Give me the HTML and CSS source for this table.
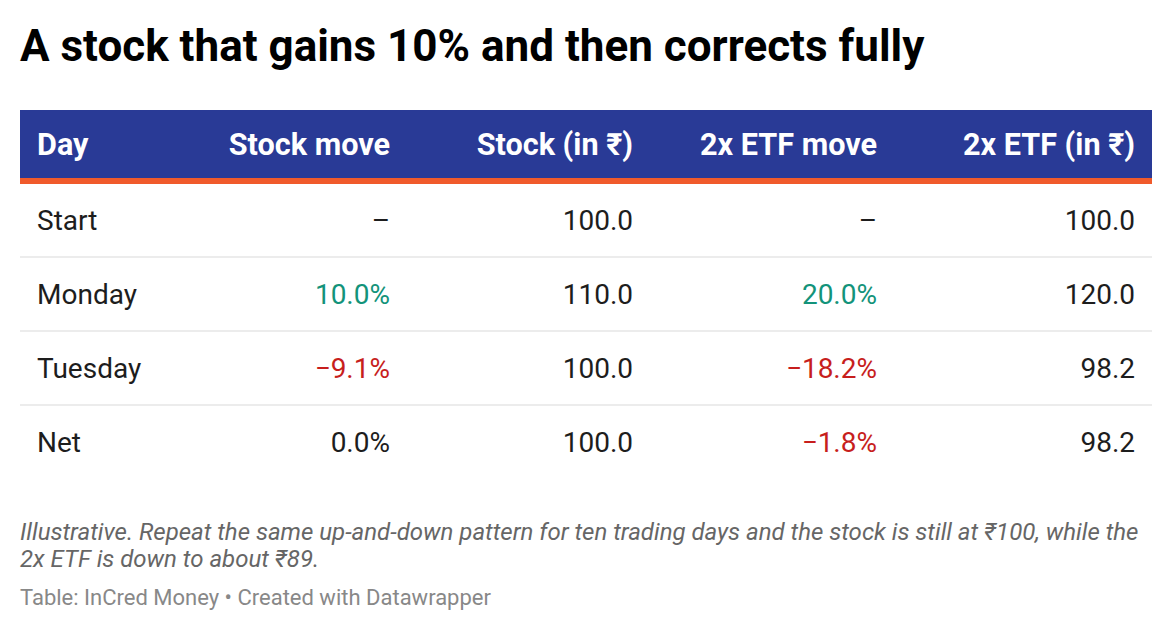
FILE: index.html
```html
<!DOCTYPE html>
<html lang="en">
<head>
<meta charset="utf-8">
<title>A stock that gains 10% and then corrects fully</title>
<link rel="stylesheet" href="styles.css">
</head>
<body>
<div class="chart">
  <h1 class="title">A stock that gains 10% and then corrects fully</h1>
  <div class="table">
    <div class="row head">
      <div class="cell left">Day</div>
      <div class="cell">Stock move</div>
      <div class="cell">Stock (in ₹)</div>
      <div class="cell">2x ETF move</div>
      <div class="cell">2x ETF (in ₹)</div>
    </div>
    <div class="row">
      <div class="cell left">Start</div>
      <div class="cell">–</div>
      <div class="cell">100.0</div>
      <div class="cell">–</div>
      <div class="cell">100.0</div>
    </div>
    <div class="row">
      <div class="cell left">Monday</div>
      <div class="cell up">10.0%</div>
      <div class="cell">110.0</div>
      <div class="cell up">20.0%</div>
      <div class="cell">120.0</div>
    </div>
    <div class="row">
      <div class="cell left">Tuesday</div>
      <div class="cell down">−9.1%</div>
      <div class="cell">100.0</div>
      <div class="cell down">−18.2%</div>
      <div class="cell">98.2</div>
    </div>
    <div class="row last">
      <div class="cell left">Net</div>
      <div class="cell">0.0%</div>
      <div class="cell">100.0</div>
      <div class="cell down">−1.8%</div>
      <div class="cell">98.2</div>
    </div>
  </div>
  <p class="notes">Illustrative. Repeat the same up-and-down pattern for ten trading days and the stock is still at ₹100, while the 2x ETF is down to about ₹89.</p>
  <p class="source">Table: InCred Money • Created with Datawrapper</p>
</div>
</body>
</html>
```
FILE: styles.css
```css
html, body {
  margin: 0;
  padding: 0;
  background: #ffffff;
}
body {
  font-family: Roboto, "Noto Sans", "DejaVu Sans", sans-serif;
  color: #1d1d1d;
}
.chart {
  padding: 20px 20px 0 20px;
}
.title {
  margin: 0;
  font-size: 44px;
  line-height: 52px;
  font-weight: 700;
  color: #000;
}
.table {
  margin-top: 38px;
}
.row {
  display: grid;
  grid-template-columns: 144px 243px 243px 244px 258px;
  height: 72px;
  align-items: center;
  border-bottom: 2px solid #ececec;
}
.row.last {
  border-bottom: none;
}
.row.head {
  height: 68px;
  background: #293a96;
  color: #ffffff;
  font-weight: 700;
  border-bottom: 6px solid #f05a2b;
}
.cell {
  padding: 0 17px;
  text-align: right;
  font-size: 28px;
  white-space: nowrap;
}
.head .cell {
  font-size: 30.6px;
}
.cell.left {
  text-align: left;
}
.up { color: #13937a; }
.down { color: #c71e1d; }
.notes {
  margin: 41px 0 0 0;
  font-size: 24px;
  line-height: 27px;
  font-style: italic;
  color: #666666;
}
.source {
  margin: 11px 0 0 0;
  font-size: 22px;
  line-height: 27px;
  color: #888888;
}
```
